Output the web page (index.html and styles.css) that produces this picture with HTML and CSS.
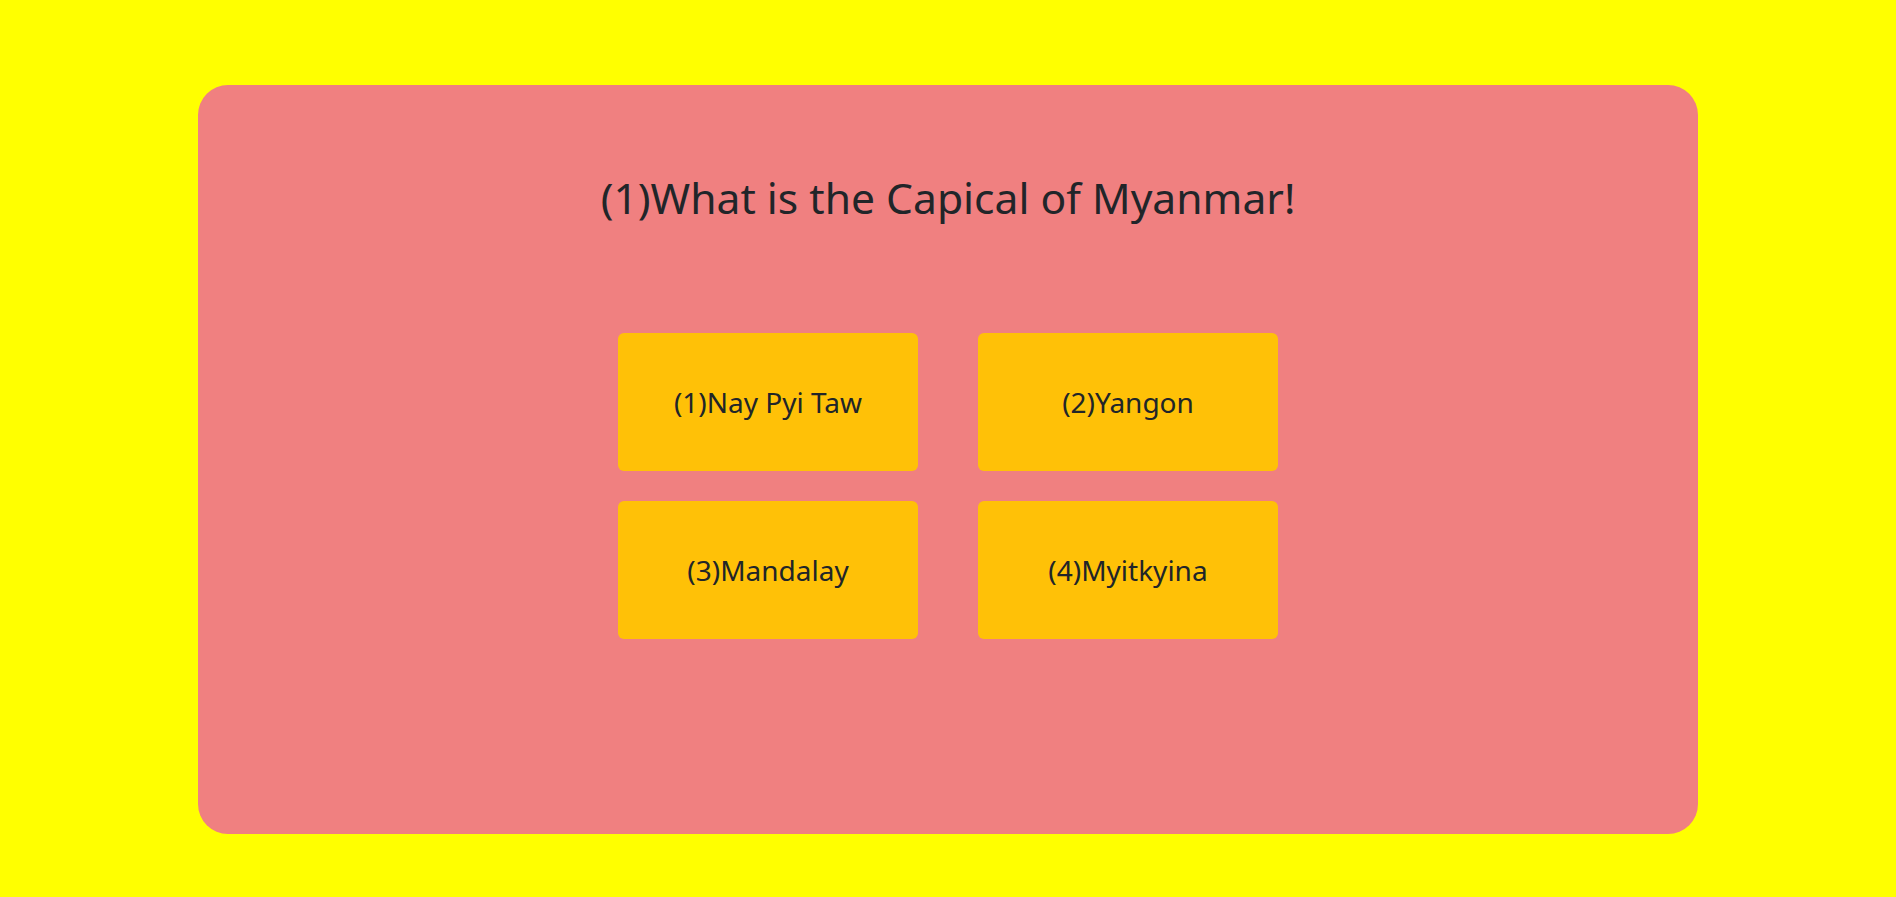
FILE: index.html
```html
<!DOCTYPE html>
<html lang="en">
<head>
<meta charset="utf-8">
<title>Quiz</title>
<link rel="stylesheet" href="styles.css">
</head>
<body>
<main class="quiz-card">
  <h1 class="question">(1)What is the Capical of Myanmar!</h1>
  <div class="answers">
    <button class="answer">(1)Nay Pyi Taw</button>
    <button class="answer">(2)Yangon</button>
    <button class="answer">(3)Mandalay</button>
    <button class="answer">(4)Myitkyina</button>
  </div>
</main>
</body>
</html>
```

FILE: styles.css
```css
html, body {
  margin: 0;
  padding: 0;
}
body {
  background: #ffff00;
  font-family: "Noto Sans", "Open Sans", sans-serif;
  color: #212529;
  padding-top: 85px;
  height: 897px;
  box-sizing: border-box;
}
.quiz-card {
  width: 1500px;
  height: 749px;
  margin: 0 auto;
  background: #f08080;
  border-radius: 30px;
  box-sizing: border-box;
  padding-top: 88px;
}
.question {
  margin: 0;
  font-size: 42.6px;
  font-weight: 400;
  line-height: 48px;
  text-align: center;
}
.answers {
  display: grid;
  grid-template-columns: 300px 300px;
  grid-auto-rows: 138px;
  column-gap: 60px;
  row-gap: 30px;
  justify-content: center;
  margin-top: 112px;
}
.answer {
  background: #ffc107;
  border: none;
  border-radius: 6px;
  font-family: inherit;
  font-size: 28px;
  color: #212529;
  padding: 0;
  cursor: pointer;
}
```
